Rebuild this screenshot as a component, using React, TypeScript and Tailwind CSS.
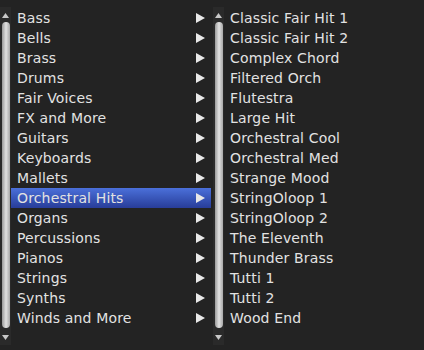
const categories = [
  "Bass",
  "Bells",
  "Brass",
  "Drums",
  "Fair Voices",
  "FX and More",
  "Guitars",
  "Keyboards",
  "Mallets",
  "Orchestral Hits",
  "Organs",
  "Percussions",
  "Pianos",
  "Strings",
  "Synths",
  "Winds and More",
];

const presets = [
  "Classic Fair Hit 1",
  "Classic Fair Hit 2",
  "Complex Chord",
  "Filtered Orch",
  "Flutestra",
  "Large Hit",
  "Orchestral Cool",
  "Orchestral Med",
  "Strange Mood",
  "StringOloop 1",
  "StringOloop 2",
  "The Eleventh",
  "Thunder Brass",
  "Tutti 1",
  "Tutti 2",
  "Wood End",
];

function ScrollBar() {
  return (
    <div className="flex h-[338px] w-[11px] flex-col items-center bg-[#2a2a2a]">
      <svg width="7" height="6" viewBox="0 0 7 6" className="mt-[6px] shrink-0">
        <polygon points="3.5,0 7,5 0,5" fill="#c8c8c8" />
      </svg>
      <div className="mt-[3px] h-[306px] w-[8px] rounded-full bg-gradient-to-r from-[#9a9a9a] via-[#e2e2e2] to-[#a8a8a8]" />
      <svg width="7" height="6" viewBox="0 0 7 6" className="mt-[7px] shrink-0">
        <polygon points="0,0 7,0 3.5,5" fill="#c8c8c8" />
      </svg>
    </div>
  );
}

function Row({ label, selected, arrow }: { label: string; selected?: boolean; arrow?: boolean }) {
  return (
    <div
      className={`flex h-[20px] items-center justify-between pl-[6px] pr-[6px] ${
        selected ? "bg-gradient-to-b from-[#4b70da] to-[#283d99]" : ""
      }`}
    >
      <span className="whitespace-nowrap text-[14px] leading-none tracking-[0.15px] text-[#e2e2e2]">{label}</span>
      {arrow && (
        <svg width="9" height="10" viewBox="0 0 9 10">
          <polygon points="0,0 9,5 0,10" fill="#e8e8e8" />
        </svg>
      )}
    </div>
  );
}

export default function App() {
  return (
    <div
      className="flex h-[350px] w-[424px] bg-[#232323] pt-[7px]"
      style={{ fontFamily: '"DejaVu Sans", Verdana, sans-serif' }}
    >
      <ScrollBar />
      <div className="w-[200px] pt-[1px]">
        {categories.map((c) => (
          <Row key={c} label={c} arrow selected={c === "Orchestral Hits"} />
        ))}
      </div>
      <div className="ml-[2px]">
        <ScrollBar />
      </div>
      <div className="flex-1 pt-[1px]">
        {presets.map((p) => (
          <Row key={p} label={p} />
        ))}
      </div>
    </div>
  );
}
